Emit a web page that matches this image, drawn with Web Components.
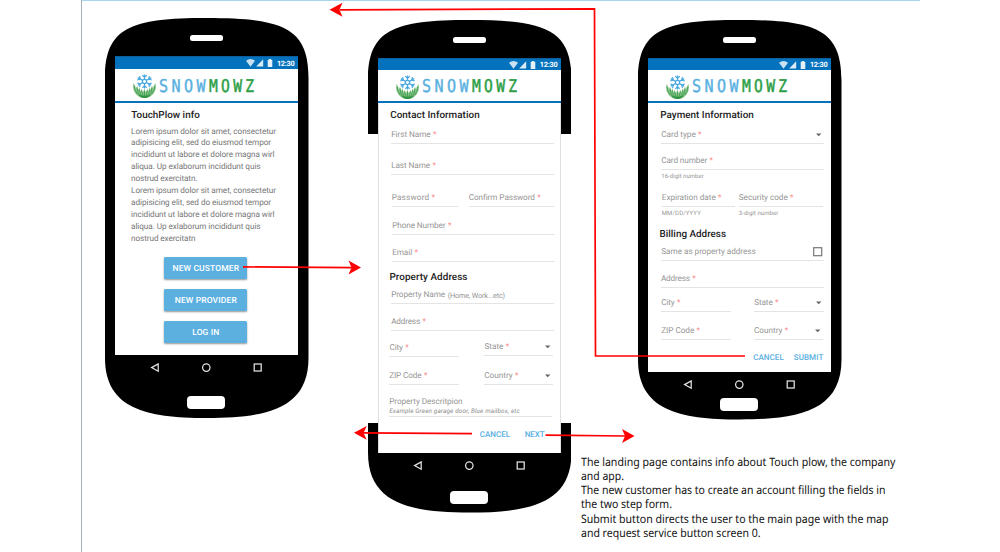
<!DOCTYPE html>
<html lang="en">
<head>
<meta charset="utf-8">
<title>SnowMowz sign-up flow</title>
<style>
html,body{margin:0;height:100%;background:#fff;overflow:hidden}
body{font-family:Roboto,"Liberation Sans",sans-serif;text-rendering:geometricPrecision}
</style>
</head>
<body>
<flow-board></flow-board>
<script>
function define(name, html, setup) {
  const t = document.createElement('template');
  t.innerHTML = html;
  customElements.define(name, class extends HTMLElement {
    connectedCallback() {
      if (this.shadowRoot) return;
      this.attachShadow({mode: 'open'}).append(t.content.cloneNode(true));
      if (setup) setup(this, this.shadowRoot);
    }
  });
}

/* One line of text that takes up the width in "w": by tracking, or with "squeeze" by narrowing the letters. */
define('fit-text', `<style>:host{display:inline-block;white-space:nowrap;transform-origin:0 50%}</style><slot></slot>`, el => {
  const n = el.textContent.length, w = +el.getAttribute('w');
  if (!w || n < 2) return;
  const natural = el.getBoundingClientRect().width;
  if (el.hasAttribute('squeeze')) {
    el.style.transform = `scaleX(${(w / natural).toFixed(4)})`;
    el.style.marginRight = (w - natural).toFixed(3) + 'px';
  } else {
    const s = (w - natural) / (n - 1);
    el.style.letterSpacing = s.toFixed(3) + 'px';
    el.style.marginRight = (-s).toFixed(3) + 'px';
  }
});

define('status-bar', `<style>
:host{display:flex;align-items:center;height:var(--status,12px);background:#0472bd;color:#fff;font:700 7.300px/12px Roboto,sans-serif;padding-left:131px;box-sizing:border-box;border-top:1px solid #0a5f9c}
svg{display:block;width:30px;height:10px;flex:none}
fit-text{margin-left:.7px;padding-top:1px}
</style><svg viewBox="0 0 30 10"><path d="M0 2.700Q4.500-.6 9 2.700L4.500 8.800Z" fill="#c9e2f3"/><path d="M17.200 1.200v7.400H10.200Z" fill="#d9ebf7"/><path d="M21.700 1.700h1.200V.9h2.200v.8h1.200v7.200h-4.600z" fill="#e4f1f9"/></svg><fit-text w="17.800">12:30</fit-text>`);

define('brand-bar', `<style>
:host{display:flex;align-items:center;height:var(--head,31px);background:#fff;border-bottom:2px solid #0472bd;padding-left:18px;box-sizing:content-box}
svg{display:block;width:23px;height:24px;flex:none;margin-top:2px}
.word{margin-left:3px;display:flex;font:400 17.600px/20px "DejaVu Sans Mono",monospace;color:#58b0e0;letter-spacing:4px;-webkit-text-stroke:.4px #58b0e0;margin-top:3px}
.word b{font-weight:400;color:#2c9e45;-webkit-text-stroke:.5px #2c9e45}
</style>
<svg viewBox="0 0 23 24">
<path d="M.6 9Q2.500 11.500 3 15L4 11.500L5.500 16L6.300 13L7.800 18L8.500 14.500L10 18.500L11.400 14.500L12.900 18.500L14.400 14.500L15.200 18L16.700 13L17.500 16L19 11.500L20 15Q20.500 11.500 22.400 9Q24 15 20.600 19.500Q17 24 11.500 24T2.400 19.500Q-1 15 .6 9Z" fill="#85c388"/>
<g stroke="#3a9a4a" stroke-width=".8" fill="none"><path d="M1.200 12Q1.300 17 4.500 20M4 13.500Q4.200 18.500 7 22M6.300 15.500Q7 20 9 23M8.600 16.500L10.300 23.500M11.500 16.500V23.500M14.400 16.500L12.700 23.500M16.700 15.500Q16 20 14 23M19 13.500Q18.800 18.500 16 22M21.800 12Q21.700 17 18.500 20"/></g>
<path d="M5 20.500Q11.500 23 18 20.500Q15 24 11.500 24T5 20.500Z" fill="#2e9340"/>
<g stroke="#48a8df" stroke-width="1.250" fill="none"><path d="M11.500.4v14M4.800 3.600l13.400 7.700M18.200 3.600L4.800 11.300"/><path d="M9.300 1.200l2.200 2 2.200-2M9.300 13.800l2.200-2 2.200 2M4.300 6l2.900-1-.6-2.900M18.700 9l-2.900 1 .6 2.900M18.700 6l-2.900-1 .6-2.900M4.300 9l2.900 1-.6 2.900"/><circle cx="11.500" cy="7.500" r="2.100" fill="#fff"/></g></svg>
<div class="word"><fit-text squeeze w="50">SNOW</fit-text><b><fit-text squeeze w="48.500">MOWZ</fit-text></b></div>`);

/* Handset: black shell behind speaker, screen, soft keys and home button. */
define('phone-frame', `<style>
:host{display:block;position:absolute;width:203.500px}
.shell{position:absolute;inset:0;width:100%;height:100%;z-index:-1}
.body{display:flex;flex-direction:column;align-items:center}
.speaker{width:33px;height:5.500px;border-radius:2.500px;background:#fff;margin-top:17px}
.screen{width:183px;margin-top:var(--gap,15.500px);height:var(--screen);background:#fff;overflow:hidden;box-sizing:border-box}
.keys{height:25px;margin:0 1px 0 0;width:112px;display:flex;align-items:center;justify-content:space-between}
.keys svg{width:112px;height:10px;display:block}
.home{width:38px;height:12.500px;border-radius:4px;background:#fff;margin:var(--home) 1.500px 0 0}
</style>
<svg class="shell"><path/></svg>
<div class="body"><div class="speaker"></div><div class="screen"><slot></slot></div>
<div class="keys"><svg viewBox="0 0 112 10" fill="none" stroke="#e4e4e4" stroke-width="1.250"><path d="M8.200 .9v7.400L1.600 4.600Z"/><circle cx="56.300" cy="4.600" r="3.700"/><rect x="104.200" y="1" width="7" height="7"/></svg></div>
<div class="home"></div></div>`, (el, r) => {
  const h = +el.getAttribute('h');
  el.style.height = h + 'px';
  const cut = el.getAttribute('cut');
  const top = y => `M0 ${y}V60C0 10 25 0 101.75 0S203.500 10 203.500 60V${y}Z`;
  const bot = y => `M0 ${y}V${h-60}C0 ${h-10} 40 ${h} 101.750 ${h}S203.500 ${h-10} 203.500 ${h-60}V${y}Z`;
  const [a, b] = cut ? cut.split(' ').map(Number) : [200, 200];
  r.querySelector('path').setAttribute('d', top(a) + bot(b));
});

define('section-title', `<style>:host{display:flex;align-items:center;height:16px;margin-bottom:-2px;font:500 9.900px/16px Roboto,sans-serif;color:#222;padding-left:var(--x,12px)}</style><fit-text></fit-text>`, (el, r) => {
  r.querySelector('fit-text').replaceWith(Object.assign(document.createElement('template'), {innerHTML: `<fit-text w="${el.getAttribute('w')}">${el.getAttribute('text')}</fit-text>`}).content);
});

/* Text field: label, required mark, optional menu arrow, tick box and hint. */
define('form-field', `<style>
:host{display:block;width:var(--w,163px);height:15px;margin-left:var(--x,13px);flex:none;color:#959595;font:400 8.200px/13.200px Roboto,sans-serif}
.line{display:flex;height:14px;align-items:flex-start;border-bottom:1px solid #e4e4e4}
i{font-style:normal;color:#fb8b8b;margin-left:2.300px}
.note{font-size:7.300px;margin-left:2.500px}
.end{margin-left:auto;display:flex;height:12px;align-items:center}
.hint{font:400 6px/8px Roboto,sans-serif;margin-top:2.500px}
svg{display:block}
</style><div class="line"></div>`, (el, r) => {
  const a = n => el.getAttribute(n);
  const line = r.querySelector('.line');
  line.innerHTML = `<fit-text w="${a('w')}">${a('label')}</fit-text>`
    + (el.hasAttribute('required') ? '<i>*</i>' : '')
    + (a('note') ? `<span class="note"><fit-text w="${a('note-w')}">${a('note')}</fit-text></span>` : '')
    + (el.hasAttribute('menu') ? '<span class="end"><svg width="9" height="4"><path d="M1 .5h5.400L3.700 3.300Z" fill="#666"/></svg></span>' : '')
    + (el.hasAttribute('tick') ? '<span class="end"><svg width="11" height="10"><rect x=".7" y=".7" width="8" height="8" fill="none" stroke="#777" stroke-width="1.200"/></svg></span>' : '');
  if (a('hint')) {
    const d = document.createElement('div');
    d.className = 'hint';
    d.innerHTML = `<fit-text w="${a('hint-w')}">${a('hint')}</fit-text>`;
    r.append(d);
  }
});

/* Row whose fields stand on its lower edge. */
define('form-row', `<style>:host{display:flex;align-items:flex-end;height:var(--h)}</style><slot></slot>`);
define('form-actions', `<style>:host{display:flex;align-items:center;height:15px;font:500 8px/15px Roboto,sans-serif;color:#56aedf}</style><slot></slot>`);
define('raised-button', `<style>:host{display:flex;width:83px;height:22px;align-items:center;justify-content:center;border-radius:1.500px;background:#5cb0e0;color:#fff;font:500 8.500px/20px Roboto,sans-serif;padding-top:2px;box-sizing:border-box;box-shadow:0 1px 2px rgba(0,0,0,.42)}</style><slot></slot>`);

define('landing-screen', `<style>
:host{display:block}
.copy{padding:3px 0 0 15.800px;font:400 8.200px/13px Roboto,sans-serif;color:#757575}
.copy div{height:11.900px;position:relative;top:.6px}
.buttons{display:flex;flex-direction:column;gap:10px;padding:13px 0 0 49px}
</style><status-bar></status-bar><brand-bar></brand-bar>
<section-title style="--x:16px;margin-top:5px" w="68.500" text="TouchPlow info"></section-title>
<div class="copy">
<div><fit-text w="145">Lorem ipsum dolor sit amet, consectetur</fit-text></div>
<div><fit-text w="140">adipisicing elit, sed do eiusmod tempor</fit-text></div>
<div><fit-text w="143.500">incididunt ut labore et dolore magna wirl</fit-text></div>
<div><fit-text w="129.500">aliqua. Up exlaborum incididunt quis</fit-text></div>
<div><fit-text w="66.500">nostrud exercitatn.</fit-text></div>
<div><fit-text w="145">Lorem ipsum dolor sit amet, consectetur</fit-text></div>
<div><fit-text w="140">adipisicing elit, sed do eiusmod tempor</fit-text></div>
<div><fit-text w="143.500">incididunt ut labore et dolore magna wirl</fit-text></div>
<div><fit-text w="129.500">aliqua. Up exlaborum incididunt quis</fit-text></div>
<div><fit-text w="64.500">nostrud exercitatn</fit-text></div>
</div>
<div class="buttons"><raised-button><fit-text w="66.500">NEW CUSTOMER</fit-text></raised-button><raised-button><fit-text w="62">NEW PROVIDER</fit-text></raised-button><raised-button><fit-text w="27">LOG IN</fit-text></raised-button></div>`);

define('contact-screen', `<style>
:host{display:block;height:100%;box-sizing:border-box}
.frame{border:solid #e0e0e0;border-width:0 1px;height:350px;box-sizing:border-box}
.frame>*{margin-left:-1px}
.sample{font:italic 400 6.300px/8px Roboto,sans-serif;color:#8c8c8c;height:9px;margin-left:10px;border-bottom:1px solid #e4e4e4;width:163px}
.free{font:400 8.200px/12px Roboto,sans-serif;color:#959595;margin:11px 0 0 10px;height:11px}
</style><status-bar></status-bar><brand-bar></brand-bar><div class="frame">
<section-title style="padding-top:5px" w="89.500" text="Contact Information"></section-title>
<form-row style="--h:22px"><form-field label="First Name" w="39.500" required></form-field></form-row>
<form-row style="--h:31px"><form-field label="Last Name" w="39" required></form-field></form-row>
<form-row style="--h:32px"><form-field style="--w:66px;--x:13.500px" label="Password" w="37.500" required></form-field><form-field style="--w:85px;--x:11px" label="Confirm Password" w="66" required></form-field></form-row>
<form-row style="--h:28px"><form-field style="--x:14px" label="Phone Number" w="53.500" required></form-field></form-row>
<form-row style="--h:27px"><form-field style="--x:14px" label="Email" w="20" required></form-field></form-row>
<section-title style="--x:11.300px;padding-top:8px" w="78" text="Property Address"></section-title>
<form-row style="--h:20px"><form-field label="Property Name" w="54" note="(Home, Work...etc)" note-w="57.500"></form-field></form-row>
<form-row style="--h:27px"><form-field label="Address" w="29" required></form-field></form-row>
<form-row style="--h:26px"><form-field style="--w:70px;--x:11.300px" label="City" w="13.500" required></form-field><form-field style="--w:69px;--x:25px;margin-bottom:1px" label="State" w="19" required menu></form-field></form-row>
<form-row style="--h:28px"><form-field style="--w:70px;--x:11px" label="ZIP Code" w="32.500" required></form-field><form-field style="--w:69px;--x:25px" label="Country" w="28.500" required menu></form-field></form-row>
<div class="free"><fit-text w="73.500">Property Descritpion</fit-text></div>
<div class="sample"><fit-text w="130.500">Example Green garage door, Blue mailbox, etc</fit-text></div>
<form-actions style="padding:9.500px 0 0 101.500px"><fit-text w="30.500">CANCEL</fit-text><span style="width:14.500px"></span><fit-text w="20">NEXT</fit-text></form-actions>
</div>`);

define('payment-screen', `<style>:host{display:block}</style><status-bar></status-bar><brand-bar></brand-bar>
<section-title style="padding-top:5px" w="93.500" text="Payment Information"></section-title>
<form-row style="--h:22px"><form-field label="Card type" w="34.500" required menu></form-field></form-row>
<form-row style="--h:26px"><form-field label="Card number" w="46" required hint="16-digit number" hint-w="42.500"></form-field></form-row>
<form-row style="--h:37px"><form-field style="--w:73px;--x:13.500px" label="Expiration date" w="54" required hint="MM/DD/YYYY" hint-w="39"></form-field><form-field style="--w:84px;--x:4px" label="Security code" w="49" required hint="3-digit number" hint-w="39.500"></form-field></form-row>
<section-title style="--x:11.300px;padding-top:20px" w="66.500" text="Billing Address"></section-title>
<form-row style="--h:20px"><form-field style="--x:13px" label="Same as property address" w="94.500" tick></form-field></form-row>
<form-row style="--h:27px"><form-field style="--x:12.700px" label="Address" w="29" required></form-field></form-row>
<form-row style="--h:24px"><form-field style="--w:70px" label="City" w="13.500" required></form-field><form-field style="--w:69.500px;--x:23px" label="State" w="18.500" required menu></form-field></form-row>
<form-row style="--h:28px"><form-field style="--w:70px" label="ZIP Code" w="33" required></form-field><form-field style="--w:69.500px;--x:22.700px" label="Country" w="28.500" required menu></form-field></form-row>
<form-actions style="padding:10px 0 0 105px"><fit-text w="30.500">CANCEL</fit-text><span style="width:10px"></span><fit-text w="29.500">SUBMIT</fit-text></form-actions>`);

define('flow-note', `<style>
:host{display:block;position:absolute;font:400 11.600px/14.300px "Noto Sans","Open Sans",sans-serif;color:#111}
div{height:14.300px}
</style>
<div><fit-text squeeze w="314.500">The landing page contains info about Touch plow, the company</fit-text></div>
<div><fit-text squeeze w="43">and app.</fit-text></div>
<div><fit-text squeeze w="304.500">The new customer has to create an account filling the fields in</fit-text></div>
<div><fit-text squeeze w="91">the two step form.</fit-text></div>
<div><fit-text squeeze w="307.500">Submit button directs the user to the main page with the map</fit-text></div>
<div><fit-text squeeze w="179.500">and request service button screen 0.</fit-text></div>`);

define('flow-arrows', `<style>:host{display:block;position:absolute;inset:0;z-index:3;pointer-events:none}svg{display:block}</style>
<svg width="1000" height="552" viewBox="0 0 1000 552" fill="#f00" stroke="none">
<g fill="none" stroke="#f00" stroke-width="1.700"><path d="M243 266.900L352 267.600M472 433.700L362 432.800M545.500 435.100L626 436M745 356H595.500L594.500 8.800L340 9.900"/></g>
<path d="M361 267.600L348.500 260.500L351.500 267.500L348.500 274.500ZM354 432.700L366.700 426L363.500 432.900L366.700 439.800ZM634.500 436L622 429L625 436L622 443ZM329.500 9.700L342.500 2.800L339.500 9.800L342.500 16.800Z"/></svg>`);

define('flow-board', `<style>
:host{display:block;position:relative;width:1000px;height:552px;overflow:hidden;isolation:isolate;background:#fff}
.board{box-sizing:border-box;width:839px;height:552px;margin-left:81px;border-left:1px solid #a9b0b5;border-top:1px solid #a8d4ee}
phone-frame{isolation:isolate}
</style><div class="board"></div>
<phone-frame h="400" style="left:105px;top:18px;--screen:299px;--home:16px;--status:13px;--head:32px"><landing-screen></landing-screen></phone-frame>
<phone-frame h="492.500" cut="114 403" style="left:367.900px;top:20px;--screen:395px;--home:13px"><contact-screen></contact-screen></phone-frame>
<phone-frame h="399.500" style="left:638px;top:20px;--screen:314px;--home:1px"><payment-screen></payment-screen></phone-frame>
<flow-note style="left:581.300px;top:455.500px"></flow-note>
<flow-arrows></flow-arrows>`);
</script>
</body>
</html>
